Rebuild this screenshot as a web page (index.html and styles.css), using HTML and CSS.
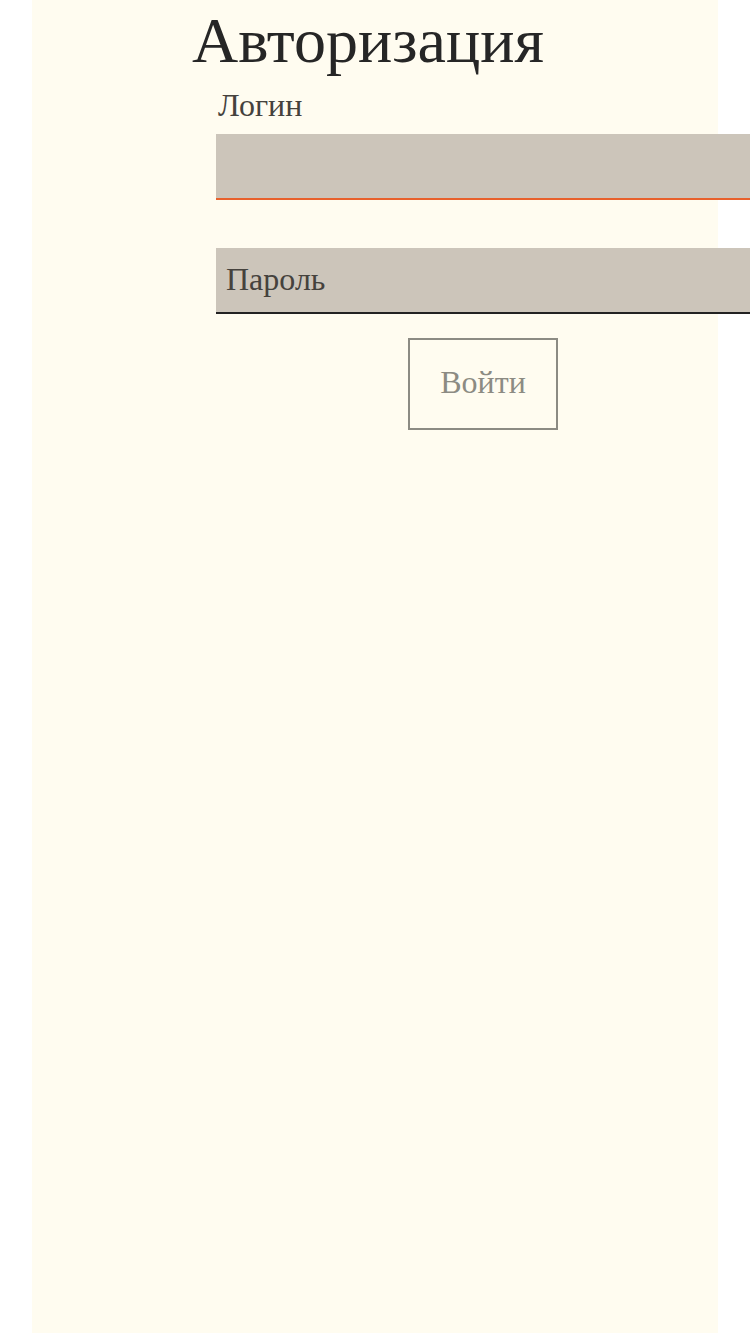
FILE: index.html
```html
<!DOCTYPE html>
<html lang="ru">
<head>
<meta charset="utf-8">
<title>Авторизация</title>
<link rel="stylesheet" href="styles.css">
</head>
<body>
<main class="panel">
  <h1 class="title">Авторизация</h1>
  <form class="form">
    <label class="label" for="login">Логин</label>
    <input class="field field-active" id="login" type="text">
    <input class="field field-password" type="password" placeholder="Пароль">
    <div class="actions">
      <button class="btn" type="button">Войти</button>
    </div>
  </form>
</main>
</body>
</html>
```

FILE: styles.css
```css
html, body {
  margin: 0;
  padding: 0;
  background: #ffffff;
  overflow: hidden;
}

body {
  font-family: "Liberation Serif", "Times New Roman", serif;
}

.panel {
  margin: 0 32px;
  min-height: 1333px;
  background: #fffcf0;
  display: flex;
  flex-direction: column;
}

.title {
  margin: 0;
  padding: 4px 0 0 160px;
  font-size: 64px;
  line-height: 74px;
  font-weight: normal;
  color: #262626;
}

.form {
  margin: 9px 0 0 184px;
  width: 534px;
  display: flex;
  flex-direction: column;
}

.label {
  display: block;
  padding-left: 2px;
  font-size: 32px;
  line-height: 37px;
  color: #45423d;
}

.field {
  box-sizing: border-box;
  width: 534px;
  height: 66px;
  margin: 0;
  padding: 0 10px 2px;
  border: 0;
  border-bottom: 2px solid #222222;
  background: #ccc5ba;
  font-family: "Liberation Serif", "Times New Roman", serif;
  font-size: 32px;
  color: #45423d;
  outline: none;
}

.field::placeholder {
  color: #45423d;
  opacity: 1;
}

.field-active {
  margin-top: 10px;
  border-bottom-color: #e8612c;
}

.field-password {
  margin-top: 48px;
}

.actions {
  display: flex;
  justify-content: center;
  margin-top: 24px;
}

.btn {
  box-sizing: border-box;
  width: 150px;
  height: 92px;
  padding: 0 0 4px;
  border: 2px solid #8c8b83;
  background: transparent;
  font-family: "Liberation Serif", "Times New Roman", serif;
  font-size: 32px;
  color: #8c8b83;
}
```
